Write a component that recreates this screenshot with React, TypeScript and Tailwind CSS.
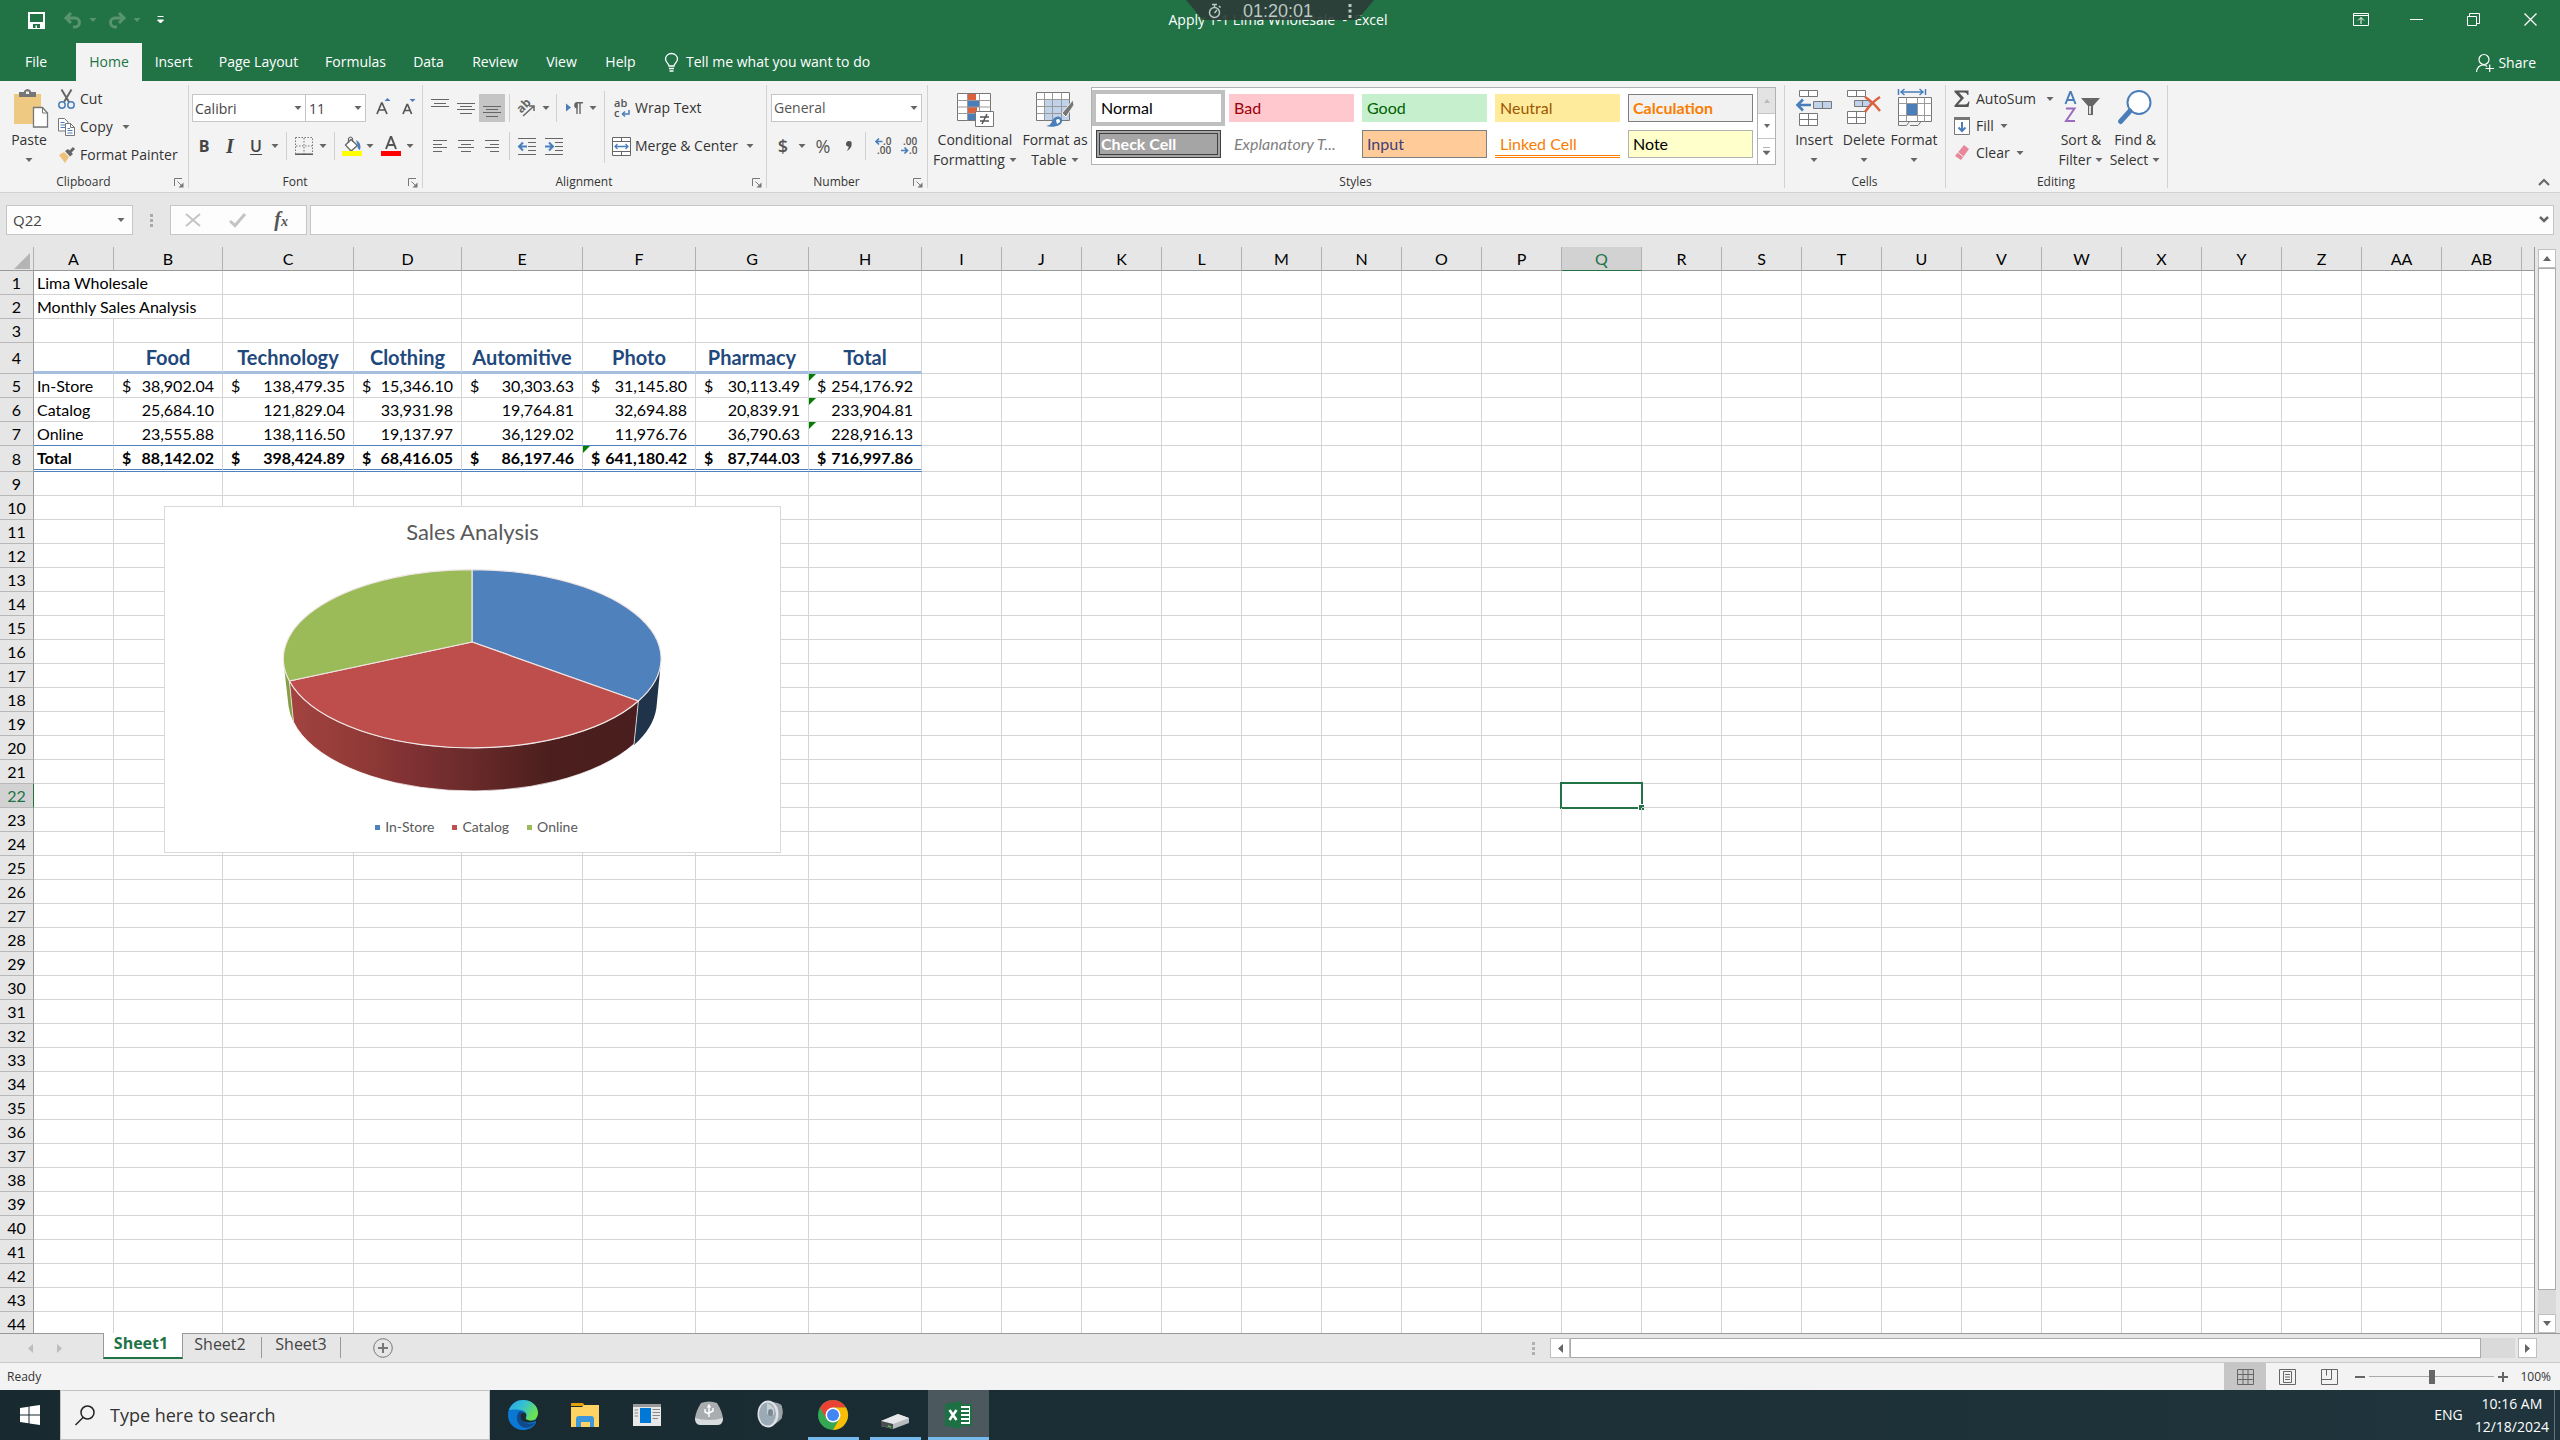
import type { ReactNode } from "react";
import clsx from "clsx";

interface IconProps {
  children: ReactNode;
  w: number;
  h: number;
}

const Icon = ({ children, w, h }: IconProps) => (
  <svg width={w} height={h} viewBox={`0 0 ${w} ${h}`} fill="none" aria-hidden="true" className="shrink-0 overflow-visible">
    {children}
  </svg>
);

const Caret = ({ color = "#666666" }: { color?: string }) => (
  <Icon w={8} h={4}>
    <path d="M0.5 0h7L4 4z" fill={color} />
  </Icon>
);

interface BtnProps {
  label: string;
  children: ReactNode;
  className?: string;
}

const Btn = ({ label, children, className }: BtnProps) => (
  <button aria-label={label} className={clsx("flex h-7 shrink-0 items-center justify-center", className)}>
    {children}
  </button>
);

const Sep = ({ className }: { className?: string }) => (
  <span className={clsx("flex h-7 shrink-0 justify-center", className)}>
    <span className="h-full w-px bg-[#d0d0d0]" />
  </span>
);

/* ---------- title bar ---------- */

const TitleBar = () => (
  <div className="relative flex h-[43px] items-start justify-between text-white">
    <div className="flex h-10 items-center pl-7">
      <button aria-label="Save">
        <Icon w={17} h={17}>
          <path d="M1 1h15v15H1z" stroke="#fff" strokeWidth="2" />
          <path d="M1 10h15v6H1z" fill="#fff" />
          <path d="M5 12h7v4H9v-2.500H7.500V16H5z" fill="#217346" />
        </Icon>
      </button>
      <button aria-label="Undo" className="ml-[19px] flex items-center gap-[7px]">
        <Icon w={18} h={16}>
          <path d="M7 1 2 6l5 5M3 6h8a4.500 4.500 0 0 1 0 9H9" stroke="#58946f" strokeWidth="3" />
        </Icon>
        <Caret color="#58946f" />
      </button>
      <button aria-label="Redo" className="ml-[11px] flex items-center gap-[7px]">
        <Icon w={18} h={16}>
          <path d="m11 1 5 5-5 5M15 6H7a4.500 4.500 0 0 0 0 9h2" stroke="#58946f" strokeWidth="3" />
        </Icon>
        <Caret color="#58946f" />
      </button>
      <button aria-label="Customize Quick Access Toolbar" className="ml-4">
        <Icon w={7} h={8}>
          <path d="M0.500 0.500h6M0.500 4h6L3.500 7z" stroke="#fff" fill="#fff" />
        </Icon>
      </button>
    </div>

    <div className="absolute inset-x-0 top-0 flex h-10 items-center justify-center pr-1 text-sm whitespace-pre">
      Apply 1-1 Lima Wholesale  -  Excel
    </div>
    <div className="absolute inset-x-0 top-0 flex justify-center">
      <div className="flex h-5 w-[188px] items-center bg-[#2c3b36]/90 pt-[2px] pr-[22px] pl-[22px] text-[#b9c8c2] [clip-path:polygon(0_0,100%_0,91%_100%,9%_100%)]">
        <Icon w={13} h={16}>
          <circle cx="6.500" cy="9.500" r="5" stroke="#b9c8c2" strokeWidth="1.500" />
          <path d="M4 1.500h5M6.500 2v3M6.500 10l2.500-3M11 3l1.500 1.500" stroke="#b9c8c2" strokeWidth="1.500" />
        </Icon>
        <span className="ml-[22px] font-['Liberation_Sans',sans-serif] text-lg leading-5">01:20:01</span>
        <span className="ml-auto">
          <Icon w={4} h={16}>
            <path d="M0.500 1h3v3h-3zM0.500 6.500h3v3h-3zM0.500 12h3v3h-3z" fill="#b9c8c2" />
          </Icon>
        </span>
      </div>
    </div>

    <div className="flex h-[38px] items-center">
      <button aria-label="Ribbon Display Options" className="w-[57px]">
        <Icon w={16} h={13}>
          <path d="M0.500 0.500h15v12h-15zM0.500 2.500h15M8 11V4.500M5 7.500l3-3 3 3" stroke="#fff" />
        </Icon>
      </button>
      <button aria-label="Minimize" className="w-[57px]">
        <Icon w={13} h={13}>
          <path d="M0 6.500h13" stroke="#fff" />
        </Icon>
      </button>
      <button aria-label="Restore" className="w-[57px]">
        <Icon w={13} h={13}>
          <path d="M0.500 3.500h9v9h-9zM2.500 3V0.500h10v10H10" stroke="#fff" />
        </Icon>
      </button>
      <button aria-label="Close" className="w-[36px]">
        <Icon w={13} h={13}>
          <path d="m0.500 0.500 12 12M12.500 0.500l-12 12" stroke="#fff" strokeWidth="1.300" />
        </Icon>
      </button>
    </div>
  </div>
);

const tabs = [
  { name: "File", width: "w-[52px]" },
  { name: "Home", width: "w-[66px]" },
  { name: "Insert", width: "w-[63px]" },
  { name: "Page Layout", width: "w-[107px]" },
  { name: "Formulas", width: "w-[87px]" },
  { name: "Data", width: "w-[59px]" },
  { name: "Review", width: "w-[74px]" },
  { name: "View", width: "w-[59px]" },
  { name: "Help", width: "w-[59px]" },
];

const TabBar = () => (
  <nav className="flex h-[38px] items-stretch justify-between pl-[10px] text-sm text-white">
    <div className="flex items-stretch">
      {tabs.map((tab) => (
        <button
          key={tab.name}
          className={clsx(
            "text-center whitespace-nowrap",
            tab.width,
            tab.name === "File" && "mr-[14px]",
            tab.name === "Home" && "bg-[#f3f3f3] text-[#217346]"
          )}
        >
          {tab.name}
        </button>
      ))}
      <button className="ml-[14px] flex items-center gap-[7px] whitespace-nowrap">
        <Icon w={15} h={19}>
          <path d="M5 13c0-2.500-3.500-3.500-3.500-7a6 5.500 0 0 1 12 0c0 3.500-3.500 4.500-3.500 7zM5 15.500h5M5.500 18h4" stroke="#fff" strokeWidth="1.300" />
        </Icon>
        Tell me what you want to do
      </button>
    </div>
    <button className="mr-[24px] flex items-center gap-1 pt-px">
      <Icon w={18} h={18}>
        <circle cx="8" cy="5.500" r="5" stroke="#fff" strokeWidth="1.200" />
        <path d="M0.600 18c0-4 3-7 6.500-7 2 0 3 .5 4 1.500M9.500 14.500H18M13.700 10.500V18" stroke="#fff" strokeWidth="1.200" />
      </Icon>
      Share
    </button>
  </nav>
);

/* ---------- ribbon ---------- */

interface GroupProps {
  title: string;
  width: string;
  launcher?: boolean;
  children: ReactNode;
}

const Group = ({ title, width, launcher, children }: GroupProps) => (
  <section aria-label={title} className={clsx("relative flex h-full shrink-0 flex-col", width)}>
    <div className="flex h-[91px] items-start">{children}</div>
    <div className={clsx("flex h-5 items-center justify-center text-xs text-[#333]", launcher ? "pr-[22px]" : "pr-[2px]")}>
      {title}
    </div>
    {launcher && (
      <button aria-label={`${title} settings`} className="absolute right-[5px] bottom-[4px]">
        <Icon w={10} h={10}>
          <path d="M0.500 8V0.500H8M3.500 3.500l4 4" stroke="#777" />
          <path d="M9.500 4.500v5h-5z" fill="#777" />
        </Icon>
      </button>
    )}
    <span className="absolute top-1 right-0 bottom-1 w-px bg-[#d2d2d2]" />
  </section>
);

interface BigButtonProps {
  icon: ReactNode;
  lines: string[];
  width: string;
}

const BigButton = ({ icon, lines, width }: BigButtonProps) => (
  <button className={clsx("flex shrink-0 flex-col items-center pt-2 text-sm leading-5 text-[#333]", width)}>
    <span className="flex h-[41px] items-start">{icon}</span>
    <span className="whitespace-nowrap">{lines[0]}</span>
    <span className="flex h-5 items-center gap-1 whitespace-nowrap">
      {lines[1]}
      <Caret />
    </span>
  </button>
);

const ClipboardGroup = () => (
  <Group title="Clipboard" width="w-[189px]" launcher>
    <BigButton
      width="w-[58px]"
      lines={["Paste"]}
      icon={
        <span className="pl-1">
          <Icon w={34} h={39}>
            <path d="M0 5h27v30H0z" fill="#eec981" />
            <path d="M5 3h5V2q3.500-4 7 0v1h5v5H5z" fill="#777" />
            <path d="M12 2.500h3v2.500h-3z" fill="#f3f3f3" />
            <path d="M19.500 18.500h9l5 5.500v14H19.500z" fill="#fff" stroke="#777" strokeWidth="1.300" />
            <path d="M28.500 18.500V24H33.500" stroke="#777" />
          </Icon>
        </span>
      }
    />
    <div className="flex flex-col pt-1 text-sm text-[#333]">
      <button className="flex h-7 items-center gap-[5px]">
        <Icon w={17} h={20}>
          <path d="M3.500 0.500 11 13M13.500 0.500 6 13" stroke="#666" strokeWidth="2" />
          <circle cx="4" cy="16" r="3.200" stroke="#4a7ebb" strokeWidth="1.500" />
          <circle cx="13" cy="16" r="3.200" stroke="#4a7ebb" strokeWidth="1.500" />
        </Icon>
        Cut
      </button>
      <button className="flex h-7 items-center gap-[5px]">
        <Icon w={17} h={18}>
          <path d="M0.500 0.500h6L10 4v9H0.500z" fill="#fff" stroke="#777" />
          <path d="M2.500 4.500h4M2.500 7h5M2.500 9.500h5" stroke="#4a7ebb" />
          <path d="M7.500 5.500h5l4 4v8h-9z" fill="#fff" stroke="#777" />
          <path d="M12.500 5.500v4h4" stroke="#777" />
          <path d="M9.500 10.500H12M9.500 12.500h5M9.500 15h5" stroke="#4a7ebb" />
        </Icon>
        Copy
        <span className="ml-1">
          <Caret />
        </span>
      </button>
      <button className="flex h-7 items-center gap-[5px] whitespace-nowrap">
        <Icon w={17} h={16}>
          <path d="M1 8l5-3 5 5-4 6z" fill="#eec07a" />
          <path d="m7 4 3-2 5 5-3 2.500z" fill="#666" />
          <path d="m12 5 4-4" stroke="#666" strokeWidth="3" />
        </Icon>
        Format Painter
      </button>
    </div>
  </Group>
);

const FontGroup = () => (
  <Group title="Font" width="w-[234px]" launcher>
    <div className="flex flex-col gap-[10px] pt-[13px] pl-[3px]">
      <div className="flex items-center">
        <div className="relative">
          <input
            aria-label="Font name"
            defaultValue="Calibri"
            className="h-7 w-[114px] border border-[#c6c6c6] bg-white pl-[2px] text-sm text-[#444]"
          />
          <span className="absolute top-3 right-1">
            <Caret />
          </span>
        </div>
        <div className="relative -ml-px">
          <input
            aria-label="Font size"
            defaultValue="11"
            className="h-7 w-[61px] border border-[#c6c6c6] bg-white pl-[3px] text-sm text-[#444]"
          />
          <span className="absolute top-3 right-1">
            <Caret />
          </span>
        </div>
        <Btn label="Increase Font Size" className="ml-1 w-[26px]">
          <Icon w={15} h={20}>
            <path d="M1 16 5.500 5h.6L11 16M2.800 12h6.400" stroke="#555" strokeWidth="1.700" />
            <path d="M8.500 3h6l-3-3z" fill="#4a7ebb" />
          </Icon>
        </Btn>
        <Btn label="Decrease Font Size" className="w-[24px]">
          <Icon w={15} h={20}>
            <path d="m2 16 4-9.500h.6l4 9.500M3.500 12.500h5.500" stroke="#555" strokeWidth="1.700" />
            <path d="M8.500 1h6l-3 3z" fill="#4a7ebb" />
          </Icon>
        </Btn>
      </div>
      <div className="flex items-center text-[#444]">
        <Btn label="Bold" className="w-6">
          <span className="text-base font-bold">B</span>
        </Btn>
        <Btn label="Italic" className="w-[28px]">
          <span className="font-['Liberation_Serif',serif] text-xl font-bold italic">I</span>
        </Btn>
        <Btn label="Underline" className="w-[24px]">
          <span className="text-base font-semibold underline underline-offset-2">U</span>
        </Btn>
        <Btn label="Underline style" className="w-[14px]">
          <Caret />
        </Btn>
        <Sep className="w-2" />
        <Btn label="Borders" className="w-[28px]">
          <Icon w={18} h={18}>
            <path d="M0.500 0.500h17v16M0.500 0.500v16M9 1v16M1 9h16" stroke="#777" strokeDasharray="1.500 1.500" />
            <path d="M0 17.200h18" stroke="#555" strokeWidth="1.500" />
          </Icon>
        </Btn>
        <Btn label="Border styles" className="w-[10px]">
          <Caret />
        </Btn>
        <Sep className="w-3" />
        <Btn label="Fill Color" className="w-6">
          <Icon w={20} h={20}>
            <path d="m9 3.500 6.500 6L9 15 3.500 9z" fill="#fff" stroke="#666" strokeWidth="1.300" />
            <path d="M6.500 7V2.500q2-3 4 0V6" stroke="#666" strokeWidth="1.200" />
            <path d="M14 4q6 3 4 10-3-1-2.500-5z" fill="#4a7ebb" />
            <path d="M0 15h20v5H0z" fill="#ff0" />
          </Icon>
        </Btn>
        <Btn label="Fill colors" className="w-3">
          <Caret />
        </Btn>
        <Btn label="Font Color" className="w-[30px]">
          <Icon w={20} h={20}>
            <path d="M5 13 9.700 1h.6L15 13M6.500 9h7" stroke="#555" strokeWidth="2" />
            <path d="M0 15h20v5H0z" fill="#f00" />
          </Icon>
        </Btn>
        <Btn label="Font colors" className="w-2">
          <Caret />
        </Btn>
      </div>
    </div>
  </Group>
);

const AlignmentGroup = () => (
  <Group title="Alignment" width="w-[344px]" launcher>
    <div className="flex flex-col gap-[10px] pt-[13px] pl-1">
      <div className="flex">
        <Btn label="Top Align" className="w-[26px]">
          <Icon w={18} h={18}>
            <path d="M0 0.500h18M3 4.500h12M0 7.500h18" stroke="#666" />
          </Icon>
        </Btn>
        <Btn label="Middle Align" className="w-[26px]">
          <Icon w={18} h={18}>
            <path d="M0 4.500h18M3 7.500h12M0 10.500h18M3 14.500h12" stroke="#666" />
          </Icon>
        </Btn>
        <Btn label="Bottom Align" className="w-[26px] bg-[#c5c5c5]">
          <Icon w={18} h={18}>
            <path d="M0 7.500h18M3 10.500h12M0 13.500h18M3 17.500h12" stroke="#666" />
          </Icon>
        </Btn>
        <Sep className="w-2" />
        <Btn label="Orientation" className="w-[28px]">
          <Icon w={20} h={20}>
            <text x="1" y="12" fontSize="12" fontWeight="700" fill="#666" transform="rotate(-45 7 10)">
              ab
            </text>
            <path d="M6 18 17 8M17 13V8h-5" stroke="#666" strokeWidth="1.500" />
          </Icon>
        </Btn>
        <Btn label="Orientation options" className="w-[10px]">
          <Caret />
        </Btn>
        <Sep className="w-[10px]" />
        <Btn label="Text Direction" className="w-[26px]">
          <Icon w={17} h={13}>
            <path d="M0 1.500 5 5.500 0 9.500z" fill="#4a7ebb" />
            <path d="M11 0v12M14 0v12M17 0.700h-6" stroke="#666" strokeWidth="1.400" />
            <path d="M11.500 0a3.300 3.300 0 0 0 0 6.600z" fill="#666" />
          </Icon>
        </Btn>
        <Btn label="Text Direction options" className="w-3">
          <Caret />
        </Btn>
      </div>
      <div className="flex">
        <Btn label="Align Left" className="w-[26px]">
          <Icon w={16} h={12}>
            <path d="M1 0.500h14M1 4.500h9M1 7.500h14M1 11.500h9" stroke="#666" />
          </Icon>
        </Btn>
        <Btn label="Center" className="w-[26px]">
          <Icon w={16} h={12}>
            <path d="M0 0.500h16M3 4.500h10M0 7.500h16M3 11.500h10" stroke="#666" />
          </Icon>
        </Btn>
        <Btn label="Align Right" className="w-[26px]">
          <Icon w={16} h={12}>
            <path d="M1 0.500h14M6 4.500h9M1 7.500h14M6 11.500h9" stroke="#666" />
          </Icon>
        </Btn>
        <Sep className="w-2" />
        <Btn label="Decrease Indent" className="w-[28px]">
          <Icon w={18} h={17}>
            <path d="M0 0.500h18M10 4.500h8M10 8.500h8M10 12.500h8M0 16.500h18" stroke="#666" />
            <path d="M9 8.500H2M5 4.500l-4 4 4 4" stroke="#4a7ebb" strokeWidth="2" />
          </Icon>
        </Btn>
        <Btn label="Increase Indent" className="w-[26px]">
          <Icon w={18} h={17}>
            <path d="M0 0.500h18M10 4.500h8M10 8.500h8M10 12.500h8M0 16.500h18" stroke="#666" />
            <path d="M0 8.500h7M4 4.500l4 4-4 4" stroke="#4a7ebb" strokeWidth="2" />
          </Icon>
        </Btn>
      </div>
    </div>
    <span className="mt-[10px] ml-[5px] h-[72px] w-px shrink-0 bg-[#d0d0d0]" />
    <div className="flex flex-col gap-[10px] pt-[13px] pl-[7px] text-sm text-[#333]">
      <button className="flex h-7 items-center gap-1 whitespace-nowrap">
        <Icon w={19} h={20}>
          <text x="2" y="9" fontSize="11" fontWeight="600" fill="#555">ab</text>
          <text x="2" y="19" fontSize="11" fontWeight="600" fill="#555">c</text>
          <path d="M17 12v4h-6M13 13.500 10.500 16l2.500 2.500" stroke="#4a7ebb" strokeWidth="1.500" />
        </Icon>
        Wrap Text
      </button>
      <button className="flex h-7 items-center gap-1 whitespace-nowrap">
        <Icon w={19} h={19}>
          <path d="M0.500 0.500h18v18H0.500zM0.500 4.500h18M0.500 14.500h18M9.500 0.500v4M9.500 14.500v4" fill="#fff" stroke="#666" />
          <path d="M3 9.500h13M5.500 7 3 9.500 5.500 12M13.500 7 16 9.500 13.500 12" stroke="#4a7ebb" strokeWidth="1.300" />
        </Icon>
        Merge &amp; Center
        <span className="ml-1">
          <Caret />
        </span>
      </button>
    </div>
  </Group>
);

const NumberGroup = () => (
  <Group title="Number" width="w-[161px]" launcher>
    <div className="flex flex-col gap-[10px] pt-[13px] pl-1">
      <div className="relative">
        <select
          aria-label="Number format"
          className="h-7 w-[151px] appearance-none border border-[#c6c6c6] bg-white pl-[2px] text-sm text-[#555]"
        >
          <option>General</option>
        </select>
        <span className="pointer-events-none absolute top-3 right-1">
          <Caret />
        </span>
      </div>
      <div className="flex text-[#555]">
        <Btn label="Accounting Number Format" className="w-6">
          <span className="text-lg font-semibold">$</span>
        </Btn>
        <Btn label="Accounting formats" className="w-[14px]">
          <Caret />
        </Btn>
        <Btn label="Percent Style" className="w-[28px]">
          <span className="text-lg">%</span>
        </Btn>
        <Btn label="Comma Style" className="w-6">
          <Icon w={6} h={10}>
            <path d="M3 0a2.700 2.700 0 0 1 2.700 3C5.700 6 4 8.500 0.500 10 2 8 3 7 2.500 5.500A2.700 2.700 0 0 1 3 0z" fill="#555" />
          </Icon>
        </Btn>
        <Sep className="w-2" />
        <Btn label="Increase Decimal" className="w-[30px]">
          <Icon w={18} h={18}>
            <path d="M7.500 4.500H1M4 1.500l-3 3 3 3" stroke="#4a7ebb" strokeWidth="1.700" />
            <text x="8" y="8" fontSize="10" fontWeight="600" fill="#555">.0</text>
            <text x="2" y="17" fontSize="10" fontWeight="600" fill="#555">.00</text>
          </Icon>
        </Btn>
        <Btn label="Decrease Decimal" className="w-[22px]">
          <Icon w={18} h={18}>
            <text x="2" y="8" fontSize="10" fontWeight="600" fill="#555">.00</text>
            <path d="M0 13.500h6.500M3.500 10.500l3 3-3 3" stroke="#4a7ebb" strokeWidth="1.700" />
            <text x="8" y="17" fontSize="10" fontWeight="600" fill="#555">.0</text>
          </Icon>
        </Btn>
      </div>
    </div>
  </Group>
);

const cellStyles = [
  { name: "Normal", style: "bg-white pl-[5px] text-black ring-4 ring-[#c0c0c0]" },
  { name: "Bad", style: "bg-[#ffc7ce] pl-[5px] text-[#9c0006]" },
  { name: "Good", style: "bg-[#c6efce] pl-[5px] text-[#006100]" },
  { name: "Neutral", style: "bg-[#ffeb9c] pl-[5px] text-[#9c5700]" },
  { name: "Calculation", style: "border border-[#7f7f7f] bg-[#f2f2f2] pl-1 font-bold text-[#fa7d00]" },
  { name: "Check Cell", style: "border-4 border-double border-[#3f3f3f] bg-[#a5a5a5] pl-px font-bold text-white" },
  { name: "Explanatory T...", style: "pl-[5px] text-[#7f7f7f] italic" },
  { name: "Input", style: "border border-[#7f7f7f] bg-[#ffcc99] pl-1 text-[#3f3f76]" },
  { name: "Linked Cell", style: "border-b-3 border-double border-[#ff8001] pt-[3px] pl-[5px] text-[#fa7d00]" },
  { name: "Note", style: "border border-[#b2b2b2] bg-[#ffffcc] pl-1 text-black" },
];

const StylesGroup = () => (
  <Group title="Styles" width="w-[857px]">
    <BigButton
      width="w-[94px]"
      lines={["Conditional", "Formatting"]}
      icon={
        <Icon w={36} h={38}>
          <path d="M0.500 4.500h33v27h-33z" fill="#fff" stroke="#777" />
          <path d="M10 5h9v6.500h-9zM10 18h10v6.500H10z" fill="#dc6141" />
          <path d="M10 11.500h12V18H10zM10 24.500h8V31h-8z" fill="#4a7ebb" />
          <path d="M0.500 11.500h33M0.500 18h33M0.500 24.500h33M10.500 4.500v27M22.500 4.500v27" stroke="#999" />
          <path d="M18.500 22.500h18v15h-18z" fill="#fff" stroke="#777" />
          <path d="M23 28h9M23 32h9M30 25l-5 10" stroke="#555" strokeWidth="1.500" />
        </Icon>
      }
    />
    <BigButton
      width="w-[66px]"
      lines={["Format as", "Table"]}
      icon={
        <Icon w={38} h={38}>
          <path d="M0.500 3.500h33v28h-33z" fill="#fff" stroke="#777" />
          <path d="M9 10h24v21H9z" fill="#c0d3ea" />
          <path d="M0.500 10.500h33M0.500 17.500h33M0.500 24.500h33M8.500 3.500v28M16.500 3.500v28M25.500 3.500v28" stroke="#999" />
          <path d="m37 11-11 13 4 4 8-12z" fill="#777" stroke="#f3f3f3" />
          <path d="M10 37c6-1 5-4 8-8q6-4 8 2c1 6-9 8-16 6z" fill="#4a7ebb" />
          <path d="M20 31q4-3 4 2l-3 2z" fill="#fff" />
        </Icon>
      }
    />
    <div className="mt-[6px] ml-[3px] flex h-[78px] border border-[#b0b3b5] bg-white">
      <div className="grid grid-cols-[repeat(5,125px)] gap-2 py-[6px] pr-1 pl-1 font-[Lato,sans-serif] text-base">
        {cellStyles.map((s) => (
          <button key={s.name} className={clsx("flex h-7 items-center whitespace-nowrap", s.style)}>
            {s.name}
          </button>
        ))}
      </div>
      <div className="grid w-[18px] grid-rows-3 border-l border-[#b0b3b5] [&>button]:flex [&>button]:items-center [&>button]:justify-center">
        <button aria-label="Previous styles" className="bg-[#e3e3e3]">
          <Icon w={6} h={4}>
            <path d="M0 4h6L3 0z" fill="#bbb" />
          </Icon>
        </button>
        <button aria-label="Next styles" className="border-y border-[#c6c6c6]">
          <Icon w={6} h={4}>
            <path d="M0 0h6L3 4z" fill="#666" />
          </Icon>
        </button>
        <button aria-label="More styles">
          <Icon w={7} h={8}>
            <path d="M0 0.500h7M0 4h7L3.500 8z" stroke="#666" strokeWidth=".5" fill="#666" />
          </Icon>
        </button>
      </div>
    </div>
  </Group>
);

const CellsGroup = () => (
  <Group title="Cells" width="w-[161px]">
    <div className="flex pl-1">
      <BigButton
        width="w-[50px]"
        lines={["Insert"]}
        icon={
          <Icon w={36} h={37}>
            <path d="M3.500 1.500h18v6h-18zM12.500 1.500v6M3.500 24.500h18v12h-18zM12.500 24.500v12M3.500 30.500h18" fill="#fff" stroke="#777" />
            <path d="M17.500 12.500h18v7h-18zM26.500 12.500v7" fill="#c0d3ea" stroke="#777" />
            <path d="M15 16H2M7 10.500 1.500 16 7 21.500" stroke="#4a7ebb" strokeWidth="2.600" />
          </Icon>
        }
      />
      <BigButton
        width="w-[50px]"
        lines={["Delete"]}
        icon={
          <Icon w={34} h={37}>
            <path d="M0.500 1.500h18v6h-18zM9.500 1.500v6M0.500 22.500h18v12h-18zM9.500 22.500v12M0.500 28.500h18" fill="#fff" stroke="#777" />
            <path d="M7.500 11.500h14l2 3-2 3h-14zM15.500 11.500v6" fill="#c0d3ea" stroke="#777" />
            <path d="M18 8q8 5 15 14M33 8q-8 5-15 15" stroke="#dc6141" strokeWidth="2.400" />
          </Icon>
        }
      />
      <BigButton
        width="w-[50px]"
        lines={["Format"]}
        icon={
          <Icon w={34} h={37}>
            <path d="M1.500 0v6M28.500 0v6M4 3h22M7.500 0l-3.500 3 3.500 3M22.500 0 26 3l-3.500 3" stroke="#4a7ebb" strokeWidth="1.500" />
            <path d="M1.500 8.500h33v24h-33z" fill="#fff" stroke="#777" />
            <path d="M9 14h11v12H9z" fill="#4a7ebb" />
            <path d="M1.500 14.500h33M1.500 26.500h33M9.500 8.500v24M20.500 8.500v24M27.500 8.500v24" stroke="#999" />
            <path d="M1.500 32.500v4h8l3-4M13 36.500h8l3-4" stroke="#777" />
          </Icon>
        }
      />
    </div>
  </Group>
);

const EditingGroup = () => (
  <Group title="Editing" width="w-[222px]">
    <div className="flex w-[108px] shrink-0 flex-col pt-1 pl-2 text-sm text-[#333]">
      <button className="flex h-[27px] items-center gap-[6px]">
        <Icon w={16} h={17}>
          <path d="M0.500 0.500h14V5h-1q-.5-2.500-3-2.500H5L10 8l-6 6.500h7q2.500 0 3.500-3h1l-1 5.500H0.500v-1.500L6.500 8.500l-6-6.500z" fill="#555" />
        </Icon>
        AutoSum
        <span className="ml-1">
          <Caret />
        </span>
      </button>
      <button className="flex h-[27px] items-center gap-[6px]">
        <Icon w={16} h={18}>
          <path d="M0.500 0.500h15v17h-15z" fill="#fff" stroke="#777" />
          <path d="M0 0h16v3H0z" fill="#777" />
          <path d="M8 5v9M4.500 10.500 8 14l3.500-3.500" stroke="#4a7ebb" strokeWidth="2" />
        </Icon>
        Fill
        <Caret />
      </button>
      <button className="flex h-[27px] items-center gap-[6px]">
        <Icon w={16} h={16}>
          <path d="m10 0 5 4-8 11-6-4z" fill="#e8869a" />
          <path d="m3.500 7 5.500 4.500" stroke="#f3f3f3" />
        </Icon>
        Clear
        <Caret />
      </button>
    </div>
    <BigButton
      width="w-[54px]"
      lines={["Sort &", "Filter"]}
      icon={
        <Icon w={34} h={35}>
          <path d="M1.500 15 6.200 3h.6l4.700 12M3 11h7" stroke="#4a7ebb" strokeWidth="2" />
          <path d="M2 19.500h8.500L2 32h9" stroke="#9b6bbd" strokeWidth="2" />
          <path d="M17 9h19l-7 8v9h-5v-9z" fill="#666" />
          <path d="M26 17v8" stroke="#ddd" strokeWidth="2" />
        </Icon>
      }
    />
    <BigButton
      width="w-[54px]"
      lines={["Find &", "Select"]}
      icon={
        <Icon w={36} h={36}>
          <circle cx="22" cy="13.500" r="11.500" fill="#fff" stroke="#4a7ebb" strokeWidth="2" />
          <path d="m13 22-9.500 10.500" stroke="#4a7ebb" strokeWidth="5" strokeLinecap="round" />
        </Icon>
      }
    />
  </Group>
);

const Ribbon = () => (
  <div className="flex h-28 items-stretch border-b border-[#d2d2d2] bg-[#f3f3f3]">
    <ClipboardGroup />
    <FontGroup />
    <AlignmentGroup />
    <NumberGroup />
    <StylesGroup />
    <CellsGroup />
    <EditingGroup />
    <button aria-label="Collapse the Ribbon" className="mr-[10px] mb-[6px] ml-auto self-end">
      <Icon w={12} h={8}>
        <path d="m1 7 5-5 5 5" stroke="#666" strokeWidth="2" />
      </Icon>
    </button>
  </div>
);

const FormulaBar = () => (
  <div className="flex h-[54px] items-center pr-[6px] pl-[6px]">
    <div className="relative">
      <input
        aria-label="Name box"
        defaultValue="Q22"
        className="h-[30px] w-[127px] border border-[#c6c6c6] bg-[#fdfdfd] pl-[6px] text-[15px] text-[#444]"
      />
      <span className="absolute top-[13px] right-2">
        <Caret />
      </span>
    </div>
    <span className="flex w-[37px] justify-center">
      <Icon w={3} h={13}>
        <path d="M0 0h3v3H0zM0 5h3v3H0zM0 10h3v3H0z" fill="#aaa" />
      </Icon>
    </span>
    <div className="flex h-[30px] w-[137px] items-center justify-around border border-[#c6c6c6] bg-[#fdfdfd] pr-1">
      <button aria-label="Cancel">
        <Icon w={16} h={14}>
          <path d="m1 1 14 12M15 1 1 13" stroke="#c4c4c4" strokeWidth="2" />
        </Icon>
      </button>
      <button aria-label="Enter">
        <Icon w={17} h={14}>
          <path d="m1 8 5 4.500L16 1" stroke="#c4c4c4" strokeWidth="3" />
        </Icon>
      </button>
      <button aria-label="Insert Function" className="font-['Liberation_Serif',serif] text-xl leading-5 font-bold text-[#555] italic">
        f<span className="text-sm">x</span>
      </button>
    </div>
    <div className="relative ml-[3px] flex-1">
      <input aria-label="Formula" className="h-[30px] w-full border border-[#c6c6c6] bg-[#fdfdfd] px-2 text-sm" />
      <span className="absolute top-[11px] right-[5px]">
        <Icon w={10} h={7}>
          <path d="m1 1 4 4 4-4" stroke="#666" strokeWidth="2.500" />
        </Icon>
      </span>
    </div>
  </div>
);

/* ---------- sheet ---------- */

const columns = [
  ..."ABCDEFGHIJKLMNOPQRSTUVWXYZ".split(""),
  "AA",
  "AB",
];

const columnWidths: Record<string, string> = {
  A: "w-[80px]",
  B: "w-[109px]",
  C: "w-[131px]",
  D: "w-[108px]",
  E: "w-[121px]",
  F: "w-[113px]",
  G: "w-[113px]",
  H: "w-[113px]",
};

const sheetData: Record<number, string[]> = {
  4: ["", "Food", "Technology", "Clothing", "Automitive", "Photo", "Pharmacy", "Total"],
  5: ["In-Store", "$38,902.04", "$138,479.35", "$15,346.10", "$30,303.63", "$31,145.80", "$30,113.49", "$254,176.92"],
  6: ["Catalog", "25,684.10", "121,829.04", "33,931.98", "19,764.81", "32,694.88", "20,839.91", "233,904.81"],
  7: ["Online", "23,555.88", "138,116.50", "19,137.97", "36,129.02", "11,976.76", "36,790.63", "228,916.13"],
  8: ["Total", "$88,142.02", "$398,424.89", "$68,416.05", "$86,197.46", "$641,180.42", "$87,744.03", "$716,997.86"],
};

const titles: Record<number, string> = {
  1: "Lima Wholesale",
  2: "Monthly Sales Analysis",
};

// cells flagged with the green "inconsistent formula" corner
const flagged = ["H5", "H6", "H7", "F8"];

const activeCell = { col: "Q", row: 22 };

const DataCell = ({ row, index }: { row: number; index: number }) => {
  const value = sheetData[row]?.[index] ?? "";
  const col = columns[index];
  const inTable = row >= 4 && row <= 8 && index < 8;
  const isActive = col === activeCell.col && row === activeCell.row;

  return (
    <td
      className={clsx(
        "relative border-r border-b border-[#d4d4d4] p-0",
        inTable && row === 4 && "border-b-3 border-b-[#a7bfde]",
        inTable && row === 7 && "border-b-[#4f81bd]",
        inTable && row === 8 && "border-b-3 border-b-[#4f81bd] [border-bottom-style:double]"
      )}
    >
      {value && row === 4 && (
        <div className="text-center text-xl leading-6 font-bold text-[#1f497d]">{value}</div>
      )}
      {value && row > 4 && index === 0 && (
        <div className={clsx("pl-[3px]", row === 8 && "font-bold")}>{value}</div>
      )}
      {value && row > 4 && index > 0 && (
        <div className={clsx("flex justify-between px-2", row === 8 && "font-bold")}>
          <span>{value.startsWith("$") ? "$" : ""}</span>
          <span>{value.replace("$", "")}</span>
        </div>
      )}
      {flagged.includes(col + row) && (
        <span className="absolute top-0 left-0 size-[7px] bg-[#008000] [clip-path:polygon(0_0,100%_0,0_100%)]" />
      )}
      {isActive && (
        <span className="absolute -inset-[2px] border-2 border-[#217346]">
          <span className="absolute -right-[3px] -bottom-[3px] size-[6px] border-t border-l border-white bg-[#217346]" />
        </span>
      )}
    </td>
  );
};

const rowHeight = (row: number) => (row === 4 ? "h-[31px]" : row === 8 ? "h-[26px]" : "h-[24px]");

const Grid = () => (
  <table className="w-full table-fixed border-separate border-spacing-0 bg-white font-[Lato,sans-serif] text-base leading-5 whitespace-nowrap text-black">
    <colgroup>
      <col className="w-[34px]" />
      {columns.map((c) => (
        <col key={c} className={columnWidths[c] ?? "w-[80px]"} />
      ))}
      <col />
    </colgroup>
    <thead>
      <tr className="h-[24px] bg-[#e6e6e6]">
        <th className="border-r border-b border-[#b0b0b0] border-b-[#999] p-0">
          <span className="flex justify-end pt-1 pr-[3px]">
            <Icon w={16} h={16}>
              <path d="M16 0v16H0z" fill="#b4b4b4" />
            </Icon>
          </span>
        </th>
        {columns.map((c) => (
          <th
            key={c}
            className={clsx(
              "border-r border-b border-r-[#b0b0b0] p-0 font-normal",
              c === activeCell.col ? "border-b-[#217346] bg-[#d2d2d2] text-[#217346]" : "border-b-[#999]"
            )}
          >
            {c}
          </th>
        ))}
        <th className="border-b border-b-[#999] p-0" />
      </tr>
    </thead>
    <tbody>
      {Array.from({ length: 44 }, (_, i) => i + 1).map((row) => (
        <tr key={row} className={rowHeight(row)}>
          <th
            className={clsx(
              "border-r border-b border-b-[#b8b8b8] p-0 text-center font-normal",
              row === activeCell.row ? "border-r-[#217346] bg-[#d2d2d2] text-[#217346]" : "border-r-[#999] bg-[#e6e6e6]"
            )}
          >
            {row}
          </th>
          {titles[row] && (
            <td colSpan={2} className="border-r border-b border-[#d4d4d4] p-0 pl-[3px]">
              {titles[row]}
            </td>
          )}
          {columns.map((c, index) =>
            titles[row] && index < 2 ? null : <DataCell key={c} row={row} index={index} />
          )}
          <td className="border-b border-[#d4d4d4] p-0" />
        </tr>
      ))}
    </tbody>
  </table>
);

const legend = [
  { name: "In-Store", color: "bg-[#4f81bd]" },
  { name: "Catalog", color: "bg-[#c0504d]" },
  { name: "Online", color: "bg-[#9bbb59]" },
];

const PieChart = () => (
  <figure className="absolute top-[259px] left-[164px] flex h-[347px] w-[617px] flex-col items-center border border-[#d9d9d9] bg-white font-[Lato,sans-serif] text-[#595959]">
    <figcaption className="pt-[11px] text-[22px] leading-7">Sales Analysis</figcaption>
    <svg viewBox="264 556 417 246" className="mt-[10px] h-[246px] w-[417px] shrink-0" aria-hidden="true">
      <defs>
        <linearGradient id="side" x1="0" x2="1" y1="0" y2="0">
          <stop offset="0" stopColor="#a34340" />
          <stop offset=".25" stopColor="#8c3835" />
          <stop offset=".3" stopColor="#863335" />
          <stop offset=".5" stopColor="#6c2b2b" />
          <stop offset=".74" stopColor="#4c1f1e" />
          <stop offset="1" stopColor="#4a1e1e" />
        </linearGradient>
      </defs>
      <path d="M284 666q1 8 5.400 15l4.100 41q-4-8-5-16z" fill="#84a044" />
      <path d="M638.400 701q18-17 22-34l-4 41q-3 20-22.400 37z" fill="#1f334b" />
      <path
        d="M289.400 681A188.700 89 0 0 0 638.400 701L634 744A184 90 0 0 1 293.500 722Z"
        fill="url(#side)"
        stroke="#fff"
        strokeWidth=".7"
      />
      <g stroke="#f0e6e6" strokeWidth="1.200" strokeLinejoin="round">
        <path d="M472 642V569.700A188.700 89 0 0 1 638.400 701Z" fill="#4f81bd" />
        <path d="M472 642 638.400 701A188.700 89 0 0 1 289.400 681Z" fill="#be4e4b" />
        <path d="M472 642 289.400 681A188.700 89 0 0 1 472 569.700Z" fill="#9bbb59" />
      </g>
    </svg>
    <ul className="mt-[15px] flex gap-[18px] pl-2 text-sm leading-5">
      {legend.map((l) => (
        <li key={l.name} className="flex items-center gap-[5px]">
          <span className={clsx("size-[5px]", l.color)} />
          {l.name}
        </li>
      ))}
    </ul>
  </figure>
);

const VerticalScroll = () => (
  <div className="flex w-[26px] shrink-0 flex-col border-l border-[#999] pt-[2px] pr-[4px] pl-[3px]">
    <button aria-label="Scroll up" className="flex h-[19px] items-center justify-center border border-[#c0c0c0] bg-white">
      <Icon w={8} h={5}>
        <path d="M0 5h8L4 0z" fill="#666" />
      </Icon>
    </button>
    <div className="flex-1 bg-[#dadada] pb-[24px]">
      <div className="h-full border border-[#ababab] bg-white" />
    </div>
    <button aria-label="Scroll down" className="flex h-[19px] items-center justify-center border border-[#c0c0c0] bg-white">
      <Icon w={8} h={5}>
        <path d="M0 0h8L4 5z" fill="#666" />
      </Icon>
    </button>
  </div>
);

const SheetTabs = () => (
  <div className="flex h-[29px] shrink-0 items-start border-t border-[#999] bg-[#e6e6e6] text-base leading-5 text-[#444]">
    <div className="flex h-7 w-[103px] items-center gap-6 pl-7">
      <button aria-label="Previous sheet">
        <Icon w={5} h={9}>
          <path d="M5 0v9L0 4.500z" fill="#bdbdbd" />
        </Icon>
      </button>
      <button aria-label="Next sheet">
        <Icon w={5} h={9}>
          <path d="M0 0v9l5-4.500z" fill="#bdbdbd" />
        </Icon>
      </button>
    </div>
    <button className="-mt-px h-[26px] w-[80px] border-x border-b-2 border-x-[#999] border-b-[#217346] bg-white pr-1 pb-1 font-bold text-[#217346]">
      Sheet1
    </button>
    <button className="w-[78px] pr-1">Sheet2</button>
    <span className="mt-[3px] h-[21px] w-px bg-[#999]" />
    <button className="w-[78px]">Sheet3</button>
    <span className="mt-[3px] h-[21px] w-px bg-[#999]" />
    <button aria-label="New sheet" className="mt-1 ml-8">
      <Icon w={20} h={20}>
        <circle cx="10" cy="10" r="9.300" stroke="#777" />
        <path d="M10 5v10M5 10h10" stroke="#777" strokeWidth="2" />
      </Icon>
    </button>
    <div className="ml-auto flex items-center pt-1">
      <Icon w={3} h={13}>
        <path d="M0 0h3v3H0zM0 5h3v3H0zM0 10h3v3H0z" fill="#b0b0b0" />
      </Icon>
      <div className="mr-[23px] ml-[15px] flex h-5 w-[987px]">
        <button aria-label="Scroll left" className="flex w-5 items-center justify-center border border-[#c0c0c0] bg-white">
          <Icon w={5} h={9}>
            <path d="M5 0v9L0 4.500z" fill="#666" />
          </Icon>
        </button>
        <div className="mr-[3px] flex-1 bg-[#dadada] pr-[34px]">
          <div className="h-full border border-[#ababab] bg-white" />
        </div>
        <button aria-label="Scroll right" className="flex w-[19px] items-center justify-center border border-[#c0c0c0] bg-white">
          <Icon w={5} h={9}>
            <path d="M0 0v9l5-4.500z" fill="#666" />
          </Icon>
        </button>
      </div>
    </div>
  </div>
);

const StatusBar = () => (
  <div className="flex h-7 shrink-0 items-center border-t border-[#c8c8c8] bg-[#f3f3f3] pl-[7px] text-xs text-[#333]">
    <span>Ready</span>
    <div className="mr-[9px] ml-auto flex h-full items-center">
      <button aria-label="Normal view" className="flex h-full w-[42px] items-center justify-center bg-[#c6c6c6]">
        <Icon w={17} h={16}>
          <path d="M0.500 0.500h16v15h-16zM0.500 5.500h16M0.500 10.500h16M6 0.500v15M11 0.500v15" stroke="#666" />
        </Icon>
      </button>
      <button aria-label="Page layout view" className="flex w-[42px] justify-center">
        <Icon w={17} h={16}>
          <path d="M0.500 0.500h16v15h-16zM4.500 2.500h8v11h-8zM6 5.500h5M6 8h5M6 10.500h5" stroke="#666" />
        </Icon>
      </button>
      <button aria-label="Page break preview" className="flex w-[42px] justify-center">
        <Icon w={17} h={16}>
          <path d="M0.500 0.500h16v15h-16zM0.500 10.500H10.500V0.500M5.500 0.500v6" stroke="#666" />
        </Icon>
      </button>
      <button aria-label="Zoom out" className="ml-[5px]">
        <Icon w={10} h={10}>
          <path d="M0 5h10" stroke="#666" strokeWidth="2" />
        </Icon>
      </button>
      <input
        type="range"
        aria-label="Zoom"
        defaultValue={50}
        className="mx-1 h-4 w-[125px] appearance-none bg-[linear-gradient(#aaa,#aaa)] bg-[length:100%_1px] bg-center bg-no-repeat [&::-webkit-slider-thumb]:h-[14px] [&::-webkit-slider-thumb]:w-[6px] [&::-webkit-slider-thumb]:appearance-none [&::-webkit-slider-thumb]:bg-[#666]"
      />
      <button aria-label="Zoom in">
        <Icon w={10} h={10}>
          <path d="M0 5h10M5 0v10" stroke="#666" strokeWidth="2" />
        </Icon>
      </button>
      <span className="ml-3">100%</span>
    </div>
  </div>
);

/* ---------- taskbar ---------- */

const EdgeIcon = () => (
  <Icon w={30} h={30}>
    <defs>
      <linearGradient id="edgeTop" x1="0" x2="1" y1="0" y2=".5">
        <stop offset="0" stopColor="#2aa6ea" />
        <stop offset=".5" stopColor="#35c1d0" />
        <stop offset="1" stopColor="#6be34d" />
      </linearGradient>
    </defs>
    <path d="M0 15C0 6 7 0 15 0s15 6 15 13l-2 6v4c-3 5-8 7-13 7C6 30 0 23 0 15z" fill="#0b78d4" />
    <path d="M1 10C4 3 9 0 15 0c9 0 15 6 15 13 0 5-4 8-8 8-4 0-5-1-4-3 2-4-1-8-6-8-5-1-9 0-11 0z" fill="url(#edgeTop)" />
    <path d="M12 11c-4 3-5 11 2 16 5 2 11 0 14-5-6 3-13 2-14-4-1-2 0-4 1-6z" fill="#114a8b" />
    <path d="M12.500 16c0 6 7 9 17.500 4v-1q-7 3-11.500.5-1.500-1-.500-3 1-3-2-4-3.500.5-3.500 3.500z" fill="#1b2c33" />
  </Icon>
);

const ExplorerIcon = () => (
  <Icon w={28} h={24}>
    <path d="M0 1q0-1 1-1h11l2 3H0z" fill="#e3a008" />
    <path d="M0 4h11l2-2h15v22H0z" fill="#ffd264" />
    <path d="M5 24v-8q0-3 3-3h12q3 0 3 3v8h-4v-5h-9v5z" fill="#3c96dc" />
  </Icon>
);

const NewsIcon = () => (
  <Icon w={28} h={22}>
    <path d="M0 0h28v22H0z" fill="#e8e8e8" />
    <path d="M0 0h28v3H0z" fill="#999" />
    <path d="M7 4h11v15H7z" fill="#0078d7" />
    <path d="M1.500 6H5M1.500 9H5M1.500 12H5M19.500 5.500H27M19.500 8.500H27M19.500 11.500H27M19.500 14.500H25" stroke="#888" />
  </Icon>
);

const UsbIcon = () => (
  <Icon w={30} h={26}>
    <path d="M7 1q8-3 16 0 5 8 6 15 0 5-5 5H6q-5 0-5-5Q2 9 7 1z" fill="#a9adb0" />
    <path d="M1 16q14 4 28 0 0 7-5 7H6q-5 0-5-7z" fill="#d9dcde" />
    <path d="M15 4v11M11 7v3l4 2M19 6v3l-4 2M13.500 5.500 15 3l1.500 2.500" stroke="#fff" strokeWidth="1.400" />
  </Icon>
);

const SpeakerIcon = () => (
  <Icon w={28} h={30}>
    <ellipse cx="19" cy="12" rx="7" ry="9" fill="#7e868b" />
    <path d="M13 2q9 0 12 4v12q-5 6-12 8z" fill="#9ca3a8" />
    <ellipse cx="11" cy="14" rx="10.500" ry="13.500" fill="#dfe3e6" />
    <ellipse cx="10.500" cy="14" rx="8.500" ry="11.500" fill="#9aabb6" />
    <path d="M10 3q9 3 7 12l-7-1z" fill="#c9d1d6" />
    <ellipse cx="13.500" cy="12.500" rx="2.500" ry="3.500" fill="#7b8890" />
  </Icon>
);

const ChromeIcon = () => (
  <Icon w={30} h={30}>
    <circle cx="15" cy="15" r="15" fill="#34a853" />
    <path d="M2 7.500A15 15 0 0 1 28 7.500H15L8.500 18.800z" fill="#ea4335" />
    <path d="M28 7.500A15 15 0 0 1 15 30l6.500-11.200L15 7.500z" fill="#fbbc05" />
    <circle cx="15" cy="15" r="7.500" fill="#fff" />
    <circle cx="15" cy="15" r="6" fill="#4285f4" />
  </Icon>
);

const DriveIcon = () => (
  <Icon w={28} h={28}>
    <path d="M0 20 17 13l11 4v5l-16 6L0 25z" fill="#b9bcbe" />
    <path d="M0 20 17 13l11 4-16 6z" fill="#e6e8e9" />
    <path d="m0 20 12 3v5L0 25z" fill="#4a4d4f" />
    <path d="m7 25 3 1" stroke="#4fbf4f" strokeWidth="1.500" />
  </Icon>
);

const ExcelIcon = () => (
  <Icon w={28} h={28}>
    <path d="M14 4h12v20H14z" fill="#fff" stroke="#1d7044" strokeWidth="2" />
    <path d="M16 7h8v2h-8zM16 11h8v2h-8zM16 15h8v2h-8zM16 19h8v2h-8z" fill="#1d7044" />
    <path d="M0 3 16 0v28L0 25z" fill="#1d7044" />
    <path d="m4.500 9 7 10M11.500 9l-7 10" stroke="#fff" strokeWidth="2.500" />
  </Icon>
);

const apps = [
  { name: "Microsoft Edge", icon: <EdgeIcon />, running: false },
  { name: "File Explorer", icon: <ExplorerIcon />, running: false },
  { name: "News", icon: <NewsIcon />, running: false },
  { name: "USB", icon: <UsbIcon />, running: false },
  { name: "Sound", icon: <SpeakerIcon />, running: false },
  { name: "Google Chrome", icon: <ChromeIcon />, running: true },
  { name: "Drive", icon: <DriveIcon />, running: true },
];

const Taskbar = () => (
  <div className="flex h-[50px] shrink-0 items-stretch bg-linear-to-r from-[#18292f] to-[#1f343c] text-white">
    <button aria-label="Start" className="flex w-[60px] items-center justify-center">
      <Icon w={20} h={20}>
        <path d="m0 3 8.500-1.300v7.800H0zM9.500 1.500 20 0v9.500H9.500zM0 10.500h8.500v7.800L0 17zM9.500 10.500H20V20L9.500 18.500z" fill="#fff" />
      </Icon>
    </button>
    <label className="flex w-[430px] items-center gap-[15px] border border-[#c3c3c3] bg-[#f2f2f2] pl-[14px]">
      <Icon w={20} h={21}>
        <circle cx="12.500" cy="7.500" r="6.500" stroke="#222" strokeWidth="1.500" />
        <path d="M8 12.500 0.500 20" stroke="#222" strokeWidth="1.500" />
      </Icon>
      <input
        aria-label="Search"
        placeholder="Type here to search"
        className="w-full bg-transparent text-lg text-[#333] placeholder:text-[#333]"
      />
    </label>
    <div className="ml-[2px] flex">
      {apps.map((app) => (
        <button key={app.name} aria-label={app.name} className="relative flex w-[62px] items-center justify-center">
          {app.icon}
          {app.running && <span className="absolute bottom-0 h-[3px] w-[51px] bg-[#76b9ed]" />}
        </button>
      ))}
      <button
        aria-label="Excel"
        className="relative ml-[2px] flex w-[61px] items-center justify-center bg-[#4b585d]"
      >
        <ExcelIcon />
        <span className="absolute bottom-0 h-[3px] w-full bg-[#76b9ed]" />
      </button>
    </div>
    <div className="mr-[5px] ml-auto flex items-center text-sm">
      <span className="mr-3">ENG</span>
      <span className="flex flex-col items-center leading-[23px]">
        <span>10:16 AM</span>
        <span>12/18/2024</span>
      </span>
      <span className="ml-[5px] h-full w-px bg-[#66757b]" />
    </div>
  </div>
);

export default function App() {
  return (
    <div className="flex h-screen flex-col overflow-hidden bg-[#e6e6e6] font-['Open_Sans',sans-serif]">
      <header className="shrink-0 bg-[#217346]">
        <TitleBar />
        <TabBar />
      </header>
      <div className="shrink-0">
        <Ribbon />
        <FormulaBar />
      </div>
      <main className="flex min-h-0 flex-1">
        <div className="relative min-w-0 flex-1 overflow-hidden">
          <Grid />
          <PieChart />
        </div>
        <VerticalScroll />
      </main>
      <SheetTabs />
      <StatusBar />
      <Taskbar />
    </div>
  );
}
